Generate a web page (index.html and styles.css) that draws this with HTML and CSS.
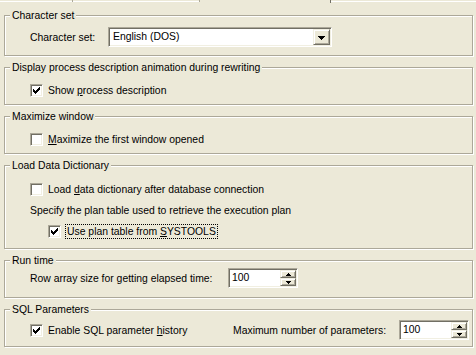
FILE: index.html
```html
<!DOCTYPE html>
<html lang="en">
<head>
<meta charset="utf-8">
<title>Options</title>
<link rel="stylesheet" href="styles.css">
</head>
<body>
<svg class="defs" width="0" height="0" aria-hidden="true">
  <symbol id="tick" viewBox="0 0 7 7"><path d="M6 0h1v1h-1z M5 1h2v1h-2z M0 2h1v1h-1z M4 2h3v1h-3z M0 3h2v1h-2z M3 3h3v1h-3z M0 4h5v1h-5z M1 5h3v1h-3z M2 6h1v1h-1z" fill="#000"/></symbol>
  <symbol id="down7" viewBox="0 0 7 4"><path d="M0 0h7v1h-7z M1 1h5v1h-5z M2 2h3v1h-3z M3 3h1v1h-1z" fill="#000"/></symbol>
  <symbol id="up5" viewBox="0 0 5 3"><path d="M2 0h1v1h-1z M1 1h3v1h-3z M0 2h5v1h-5z" fill="#000"/></symbol>
  <symbol id="down5" viewBox="0 0 5 3"><path d="M0 0h5v1h-5z M1 1h3v1h-3z M2 2h1v1h-1z" fill="#000"/></symbol>
</svg>

<div class="tabstrip">
  <span class="tab tab-a"></span>
  <span class="tab tab-b"></span>
  <span class="tab tab-sel"></span>
  <span class="tab tab-rest"></span>
</div>

<main class="page">
  <section class="group g-charset">
    <span class="legend">Character set</span>
    <div class="row">
      <span class="lbl lbl-charset">Character set:</span>
      <div class="field combo">
        <span class="combo-val">English (DOS)</span>
        <span class="btn dd-btn"><svg class="arrow7"><use href="#down7"/></svg></span>
      </div>
    </div>
  </section>

  <section class="group g-single">
    <span class="legend">Display process description animation during rewriting</span>
    <label class="check">
      <span class="cb"><svg class="tick"><use href="#tick"/></svg></span>
      <span>Show <u>p</u>rocess description</span>
    </label>
  </section>

  <section class="group g-single">
    <span class="legend">Maximize window</span>
    <label class="check">
      <span class="cb"></span>
      <span><u>M</u>aximize the first window opened</span>
    </label>
  </section>

  <section class="group g-dict">
    <span class="legend">Load Data Dictionary</span>
    <label class="check">
      <span class="cb"></span>
      <span>Load <u>d</u>ata dictionary after database connection</span>
    </label>
    <p class="text-row">Specify the plan table used to retrieve the execution plan</p>
    <label class="check check-sub">
      <span class="cb"><svg class="tick"><use href="#tick"/></svg></span>
      <span class="focus">Use plan table from <u>S</u>YSTOOLS</span>
    </label>
  </section>

  <section class="group g-spin">
    <span class="legend">Run time</span>
    <div class="row">
      <span class="lbl lbl-row">Row array size for getting elapsed time:</span>
      <div class="field spin">
        <span class="spin-val">100</span>
        <span class="spin-btns">
          <span class="btn sbtn"><svg class="arrow5"><use href="#up5"/></svg></span>
          <span class="btn sbtn"><svg class="arrow5"><use href="#down5"/></svg></span>
        </span>
      </div>
    </div>
  </section>

  <section class="group g-sql">
    <span class="legend">SQL Parameters</span>
    <div class="row">
      <label class="check check-sql">
        <span class="cb"><svg class="tick"><use href="#tick"/></svg></span>
        <span>Enable SQL parameter <u>h</u>istory</span>
      </label>
      <span class="lbl">Maximum number of parameters:</span>
      <div class="field spin spin-right">
        <span class="spin-val">100</span>
        <span class="spin-btns">
          <span class="btn sbtn"><svg class="arrow5"><use href="#up5"/></svg></span>
          <span class="btn sbtn"><svg class="arrow5"><use href="#down5"/></svg></span>
        </span>
      </div>
    </div>
  </section>
</main>
</body>
</html>
```

FILE: styles.css
```css
* { box-sizing: border-box; }

html, body {
  margin: 0;
  padding: 0;
  background: #ECE9D8;
}

body {
  width: 476px;
  height: 355px;
  overflow: hidden;
  font-family: "Liberation Sans", Arial, sans-serif;
  font-size: 10.4px;
  line-height: 13px;
  color: #000;
}

.defs { position: absolute; width: 0; height: 0; overflow: hidden; }

u { text-decoration: underline; text-underline-offset: 1px; }

/* remnants of the tab strip above the page */
.tabstrip {
  display: flex;
  height: 3px;
  margin-bottom: 12px;
}
.tab { height: 2px; box-shadow: inset 0 -1px 0 #fff; }
.tab-a { width: 73px; border-right: 1px solid #ACA899; }
.tab-b { width: 127px; border-right: 1px solid #ACA899; }
.tab-sel { width: 131px; height: 3px; box-shadow: none; border-right: 1px solid #716F64; }
.tab-rest { flex: 1; }

.page {
  padding-left: 4px;
}

.group {
  position: relative;
  width: 469px;
  border: 1px solid #ACA899;
  box-shadow: 1px 1px 0 #fff, inset 1px 1px 0 #fff;
  padding-left: 25px;
  padding-right: 3px;
  margin-top: 11px;
}
.group:first-child { margin-top: 0; }

.legend {
  position: absolute;
  top: -7px;
  left: 5px;
  padding: 0 2px;
  background: #ECE9D8;
  white-space: nowrap;
}

.g-charset { padding-top: 11px; padding-bottom: 8px; }
.g-single { padding-top: 16px; padding-bottom: 7px; }
.g-dict { padding-top: 17px; padding-bottom: 9px; }
.g-spin { padding-top: 7px; padding-bottom: 9px; }
.g-sql { padding-top: 10px; padding-bottom: 6px; }

.row {
  display: flex;
  align-items: center;
  height: 20px;
}

.lbl { white-space: nowrap; }
.lbl-charset { width: 78px; }
.lbl-row { width: 198px; }

/* sunken 3D field */
.field {
  background: #fff;
  border: 1px solid;
  border-color: #ACA899 #fff #fff #ACA899;
  box-shadow: inset 1px 1px 0 #716F64, inset -1px -1px 0 #F1EFE2;
  padding: 1px;
  display: flex;
  height: 20px;
}

/* raised 3D button */
.btn {
  display: flex;
  align-items: center;
  justify-content: center;
  background: #ECE9D8;
  border: 1px solid;
  border-color: #F1EFE2 #716F64 #716F64 #F1EFE2;
  box-shadow: inset 1px 1px 0 #fff, inset -1px -1px 0 #ACA899;
}

.combo { width: 224px; }
.combo-val {
  flex: 1;
  padding-left: 3px;
  line-height: 16px;
}
.dd-btn { width: 17px; height: 16px; }
.arrow7 { width: 7px; height: 4px; display: block; margin-top: 1px; }

.spin { width: 70px; }
.spin-right { margin-left: auto; }
.spin-val {
  flex: 1;
  padding-left: 2px;
  line-height: 16px;
}
.spin-btns {
  display: flex;
  flex-direction: column;
  width: 16px;
  height: 16px;
}
.sbtn { width: 16px; height: 8px; }
.arrow5 { width: 5px; height: 3px; display: block; }

/* checkboxes */
.check {
  display: flex;
  align-items: center;
  gap: 5px;
  height: 13px;
  white-space: nowrap;
}
.cb {
  width: 13px;
  height: 13px;
  flex: none;
  background: #fff;
  border: 1px solid;
  border-color: #ACA899 #fff #fff #ACA899;
  box-shadow: inset 1px 1px 0 #716F64, inset -1px -1px 0 #F1EFE2;
  padding: 2px;
}
.tick { width: 7px; height: 7px; display: block; }

.text-row {
  margin: 8px 0 0;
  height: 13px;
  white-space: nowrap;
}

.check-sub {
  margin-top: 7px;
  margin-left: 18px;
  height: 15px;
  gap: 4px;
}
.focus {
  border: 1px dotted #000;
  padding: 0 1px;
  line-height: 13px;
}

.check-sql { width: 203px; }
```
